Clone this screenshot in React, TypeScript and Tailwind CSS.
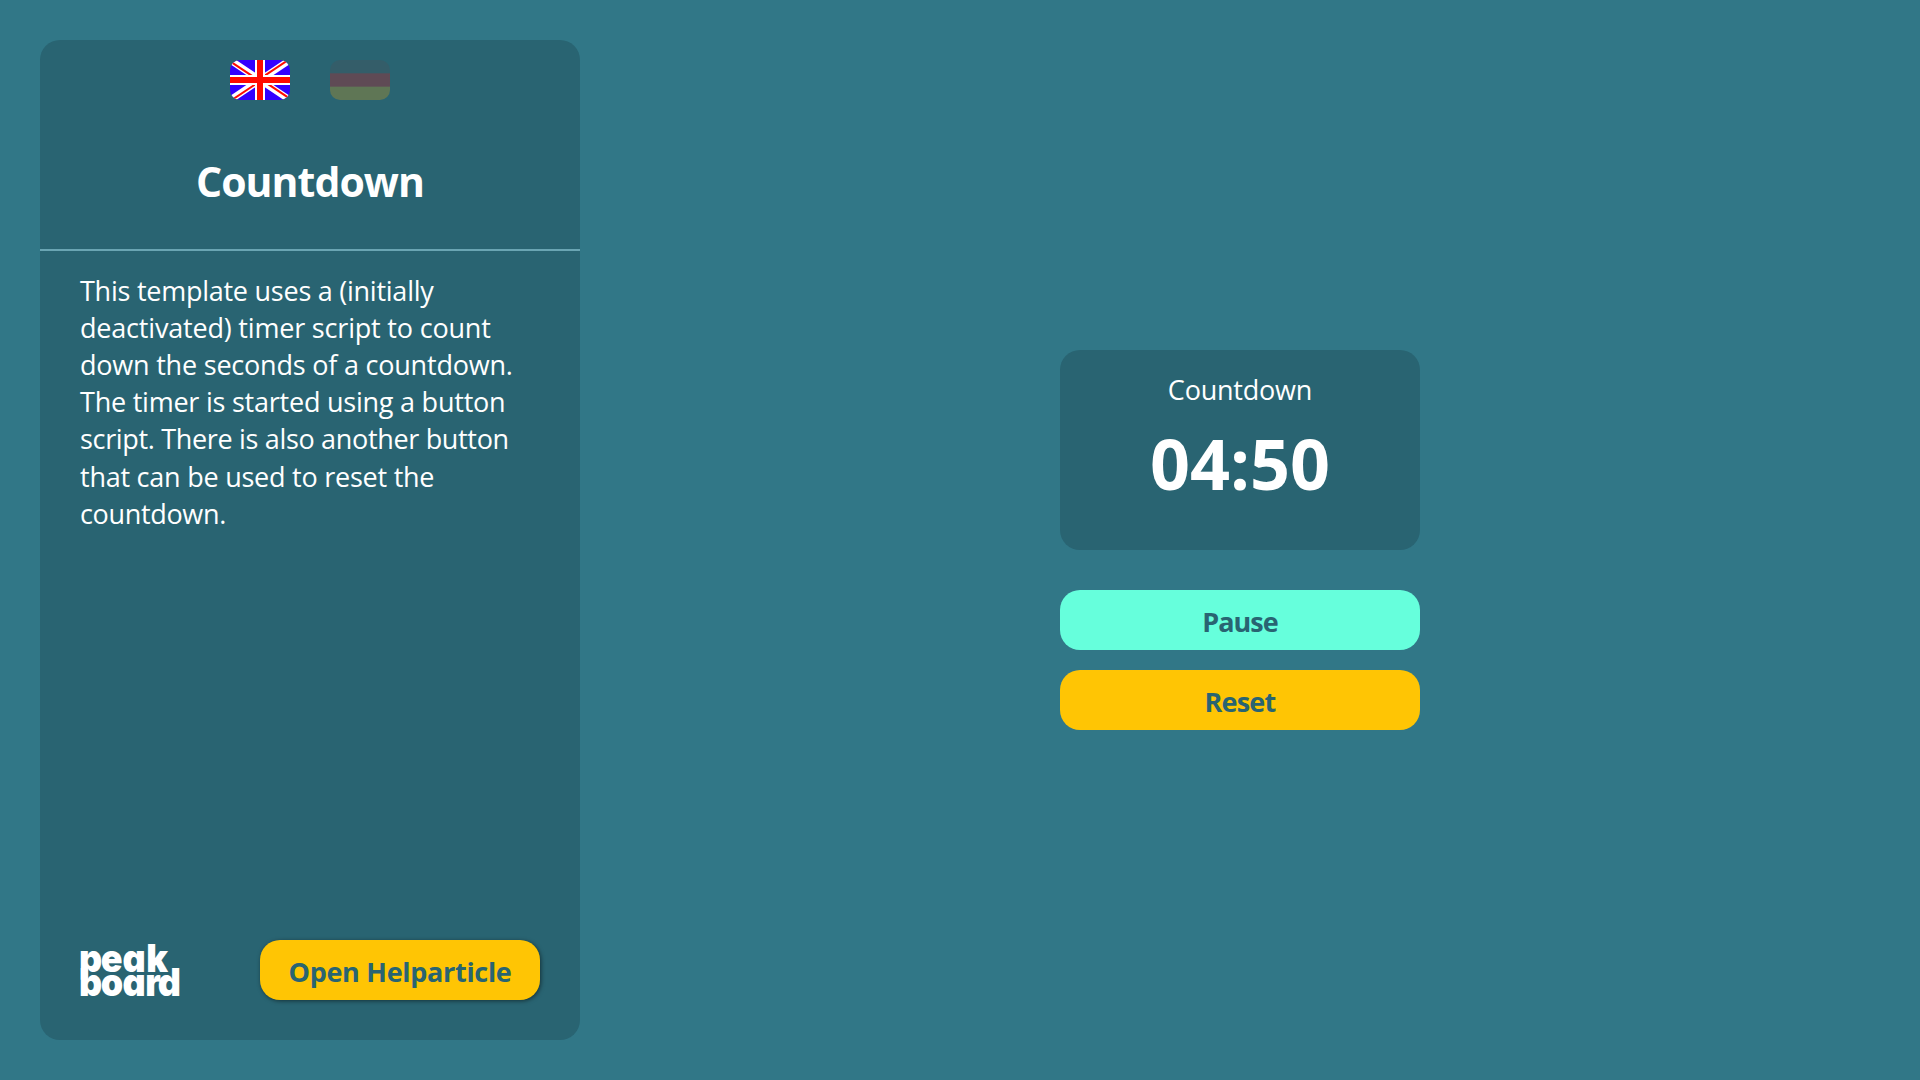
const description = [
  { text: "This template uses a (initially", tracking: "tracking-[-0.25px]" },
  { text: "deactivated) timer script to count", tracking: "tracking-[-0.19px]" },
  { text: "down the seconds of a countdown.", tracking: "tracking-[-0.21px]" },
  { text: "The timer is started using a button", tracking: "tracking-[-0.23px]" },
  { text: "script. There is also another button", tracking: "tracking-[-0.33px]" },
  { text: "that can be used to reset the", tracking: "tracking-[-0.24px]" },
  { text: "countdown.", tracking: "tracking-[-0.33px]" },
];

function BritishFlag() {
  return (
    <svg viewBox="0 0 60 40" className="block h-10 w-[60px] rounded-[10px]">
      <clipPath id="saltire">
        <path d="M30 20h30v20zv20h-30zh-30v-20zv-20h30z" />
      </clipPath>
      <rect width="60" height="40" fill="#3300ff" />
      <path d="M0 0L60 40M60 0L0 40" stroke="#fff" strokeWidth="6.8" />
      <path d="M0 0L60 40M60 0L0 40" stroke="#ff0a00" strokeWidth="4" clipPath="url(#saltire)" />
      <path d="M30 0V40M0 20H60" stroke="#fff" strokeWidth="10" />
      <path d="M30 0V40M0 20H60" stroke="#ff0a00" strokeWidth="6" />
    </svg>
  );
}

function GermanFlag() {
  return (
    <svg viewBox="0 0 60 40" className="block h-10 w-[60px] rounded-[10px] opacity-25">
      <rect width="60" height="14" fill="#554b4f" />
      <rect y="13.33" width="60" height="14" fill="#ff0000" />
      <rect y="26.67" width="60" height="13.33" fill="#ffac00" />
    </svg>
  );
}

function Logo() {
  return (
    <svg viewBox="0 0 100 56" className="block h-14 w-[100px] overflow-visible">
      <g
        transform="scale(0.92 1)"
        fill="#fff"
        className="text-[39px] font-black [font-family:Inter,sans-serif] [font-feature-settings:'cv11']"
      >
        <text x="-1.1 22.6 46.3 72" y="29.8">peak</text>
        <text x="-1.1 22.6 46.3 71 84.6" y="54">board</text>
      </g>
    </svg>
  );
}

export default function App() {
  return (
    <div className="flex h-[1080px] w-[1920px] overflow-hidden bg-[#317787] p-10 text-white [font-family:'Open_Sans','Noto_Sans',sans-serif]">
      <aside className="flex h-[1000px] w-[540px] flex-col rounded-[20px] bg-[#296472]">
        <div className="flex justify-center gap-10 pt-5">
          <BritishFlag />
          <GermanFlag />
        </div>
        <h1 className="mt-[51px] text-center text-[41px] leading-[60px] font-[730] tracking-[-0.95px]">Countdown</h1>
        <div className="mt-[38px] h-0.5 bg-[#6aa5b3]" />
        <p className="mt-[20.5px] px-10 text-[27px] leading-[37.24px]">
          {description.map((line) => (
            <span key={line.text} className={"block whitespace-nowrap " + line.tracking}>
              {line.text}
            </span>
          ))}
        </p>
        <div className="mt-auto flex items-start justify-between px-10 pb-10">
          <div className="pt-0.5">
            <Logo />
          </div>
          <button className="h-[60px] w-[280px] rounded-[20px] bg-[#ffc504] pt-[5px] text-[27px] font-bold tracking-[-0.3px] text-[#296472] shadow-[1px_1px_4px_rgba(0,0,0,0.5)]">
            Open Helparticle
          </button>
        </div>
      </aside>
      <main className="flex flex-1 flex-col items-center pt-[310px] pl-5">
        <section className="h-[200px] w-[360px] rounded-[20px] bg-[#296472] pt-5 text-center">
          <h2 className="text-[27px] leading-10 tracking-[-0.22px]">Countdown</h2>
          <div className="mt-[13px] text-[70px] leading-[80px] font-bold">04:50</div>
        </section>
        <button className="mt-10 h-[60px] w-[360px] rounded-[20px] bg-[#66ffdc] pt-[5px] text-[27px] font-bold tracking-[-1px] text-[#296472]">
          Pause
        </button>
        <button className="mt-5 h-[60px] w-[360px] rounded-[20px] bg-[#ffc504] pt-[5px] text-[27px] font-bold tracking-[-0.8px] text-[#296472]">
          Reset
        </button>
      </main>
    </div>
  );
}
